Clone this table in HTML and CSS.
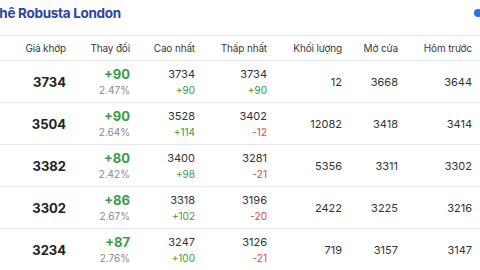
FILE: index.html
```html
<!DOCTYPE html>
<html lang="vi">
<head>
<meta charset="utf-8">
<link rel="stylesheet" href="styles.css">
</head>
<body>
<div class="page">
  <div class="title-bar">
    <h2 class="title">Cà phê Robusta London</h2>
    <span class="dot"></span>
  </div>
  <div class="table">
    <div class="row head">
      <div class="cell">Giá khớp</div>
      <div class="cell">Thay đổi</div>
      <div class="cell">Cao nhất</div>
      <div class="cell">Thấp nhất</div>
      <div class="cell">Khối lượng</div>
      <div class="cell">Mở cửa</div>
      <div class="cell">Hôm trước</div>
    </div>
    <div class="row">
      <div class="cell price">3734</div>
      <div class="cell stack"><span class="chg up">+90</span><span class="pct">2.47%</span></div>
      <div class="cell stack"><span class="val">3734</span><span class="sub up">+90</span></div>
      <div class="cell stack"><span class="val">3734</span><span class="sub up">+90</span></div>
      <div class="cell num">12</div>
      <div class="cell num">3668</div>
      <div class="cell num">3644</div>
    </div>
    <div class="row">
      <div class="cell price">3504</div>
      <div class="cell stack"><span class="chg up">+90</span><span class="pct">2.64%</span></div>
      <div class="cell stack"><span class="val">3528</span><span class="sub up">+114</span></div>
      <div class="cell stack"><span class="val">3402</span><span class="sub down">-12</span></div>
      <div class="cell num">12082</div>
      <div class="cell num">3418</div>
      <div class="cell num">3414</div>
    </div>
    <div class="row">
      <div class="cell price">3382</div>
      <div class="cell stack"><span class="chg up">+80</span><span class="pct">2.42%</span></div>
      <div class="cell stack"><span class="val">3400</span><span class="sub up">+98</span></div>
      <div class="cell stack"><span class="val">3281</span><span class="sub down">-21</span></div>
      <div class="cell num">5356</div>
      <div class="cell num">3311</div>
      <div class="cell num">3302</div>
    </div>
    <div class="row">
      <div class="cell price">3302</div>
      <div class="cell stack"><span class="chg up">+86</span><span class="pct">2.67%</span></div>
      <div class="cell stack"><span class="val">3318</span><span class="sub up">+102</span></div>
      <div class="cell stack"><span class="val">3196</span><span class="sub down">-20</span></div>
      <div class="cell num">2422</div>
      <div class="cell num">3225</div>
      <div class="cell num">3216</div>
    </div>
    <div class="row">
      <div class="cell price">3234</div>
      <div class="cell stack"><span class="chg up">+87</span><span class="pct">2.76%</span></div>
      <div class="cell stack"><span class="val">3247</span><span class="sub up">+100</span></div>
      <div class="cell stack"><span class="val">3126</span><span class="sub down">-21</span></div>
      <div class="cell num">719</div>
      <div class="cell num">3157</div>
      <div class="cell num">3147</div>
    </div>
  </div>
</div>
</body>
</html>
```
FILE: styles.css
```css
html, body {
  margin: 0;
  padding: 0;
  background: #fff;
  overflow: hidden;
}
body {
  width: 480px;
  height: 270px;
  font-family: Inter, "Noto Sans", sans-serif;
  color: #333;
}
.page {
  width: 480px;
  overflow: hidden;
}
.title-bar {
  height: 35px;
  display: flex;
  align-items: center;
  justify-content: space-between;
  padding-bottom: 9px;
  box-sizing: border-box;
  margin-right: -2px;
}
.title {
  margin: 0 0 0 -29px;
  font-size: 13.5px;
  font-weight: 700;
  color: #2a46a0;
  letter-spacing: -0.3px;
  white-space: nowrap;
}
.dot {
  width: 8px;
  height: 8px;
  border-radius: 50%;
  background: #2f6fe6;
  flex: none;
}
.table {
  border-top: 1px solid #e6e9ee;
}
.row {
  display: grid;
  grid-template-columns: 66px 64px 65px 72px 75px 56px 74px;
  height: 42px;
  border-bottom: 1px solid #e6e9ee;
  box-sizing: border-box;
  align-items: center;
}
.row.head {
  height: 25px;
  border-bottom: 1px solid #e3e6eb;
}
.cell {
  text-align: right;
  white-space: nowrap;
}
.head .cell {
  font-size: 10px;
  letter-spacing: -0.15px;
  color: #3a3a3a;
}
.price {
  font-size: 13px;
  font-weight: 700;
  color: #222;
}
.num {
  font-size: 11px;
  color: #333;
}
.stack {
  display: flex;
  flex-direction: column;
  align-items: flex-end;
  gap: 1px;
}
.chg {
  font-size: 13px;
  font-weight: 700;
  line-height: 16px;
}
.pct {
  font-size: 10px;
  color: #8a8a8a;
  line-height: 14px;
}
.val {
  font-size: 11px;
  color: #333;
  line-height: 15px;
}
.sub {
  font-size: 10px;
  line-height: 14px;
}
.up { color: #3a9a46; }
.down { color: #e0483b; }
```
